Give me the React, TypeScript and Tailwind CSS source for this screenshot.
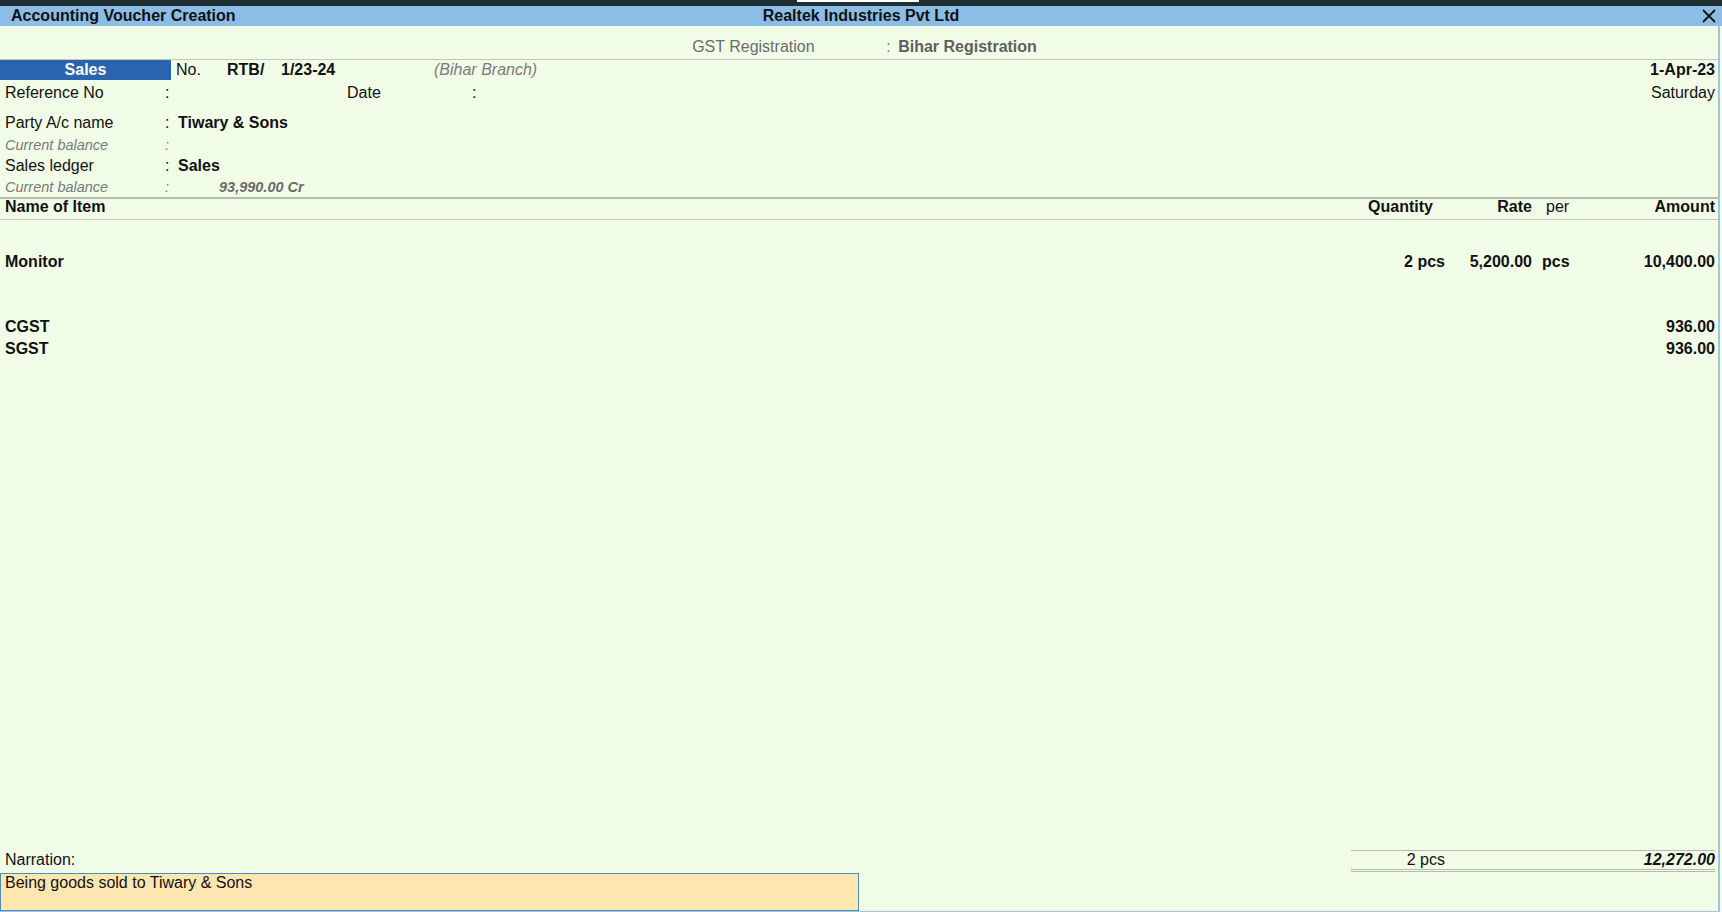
import React from 'react';

type Item = { name: string; qty?: string; rate?: string; per?: string; amount: string; gap: string };

const items: Item[] = [
  { name: 'Monitor', qty: '2 pcs', rate: '5,200.00', per: 'pcs', amount: '10,400.00', gap: 'mt-[32px]' },
  { name: 'CGST', amount: '936.00', gap: 'mt-[45px]' },
  { name: 'SGST', amount: '936.00', gap: 'mt-[2px]' },
];

function CloseIcon() {
  return (
    <svg width="14" height="14" viewBox="0 0 14 14" className="text-[#111]">
      <path d="M1 1 L13 13 M13 1 L1 13" stroke="currentColor" strokeWidth="1.8" fill="none" />
    </svg>
  );
}

export default function App() {
  return (
    <div className="w-[1722px] h-[912px] flex flex-col bg-[#f1fde7] font-['Liberation_Sans',Arial,sans-serif] text-[16px] text-[#111] overflow-hidden">
      {/* window strip */}
      <div className="h-[6px] shrink-0 bg-[#1e2e31] flex">
        <div className="ml-[797px] w-[122px] h-[2px] bg-white" />
      </div>

      {/* title bar */}
      <div className="h-[20px] shrink-0 bg-[#8bbde6] flex items-center px-[11px] font-bold leading-none">
        <div className="flex-1">Accounting Voucher Creation</div>
        <div className="-ml-[5px]">Realtek Industries Pvt Ltd</div>
        <div className="flex-1 flex justify-end -mr-[5px]">
          <CloseIcon />
        </div>
      </div>

      <div className="flex-1 flex flex-col mr-[2px] border-r-2 border-b border-[#9cc6e8]">
        {/* GST registration */}
        <div className="h-[34px] shrink-0 pt-[11px] border-b border-[#c4c7c0]">
          <div className="h-[20px] pl-[11px] flex items-center justify-center">
            <span className="w-[194px] text-[#6b6b6b]">GST Registration</span>
            <span className="w-[12px] text-[#808080]">:</span>
            <span className="font-bold text-[#5f5f5f]">Bihar Registration</span>
          </div>
        </div>

        {/* voucher type row */}
        <div className="h-[20px] shrink-0 flex items-center pr-[3px]">
          <div className="w-[171px] h-full bg-[#2b64ae] text-white font-bold flex items-center justify-center">Sales</div>
          <span className="ml-[5px] w-[51px]">No.</span>
          <span className="w-[54px] font-bold">RTB/</span>
          <span className="w-[153px] font-bold">1/23-24</span>
          <span className="italic text-[#7a7a7a]">(Bihar Branch)</span>
          <span className="flex-1" />
          <span className="font-bold">1-Apr-23</span>
        </div>

        <div className="h-[20px] mt-[3px] shrink-0 flex items-center pl-[5px] pr-[3px]">
          <span className="w-[160px]">Reference No</span>
          <span className="w-[182px]">:</span>
          <span className="w-[125px]">Date</span>
          <span>:</span>
          <span className="flex-1" />
          <span>Saturday</span>
        </div>

        <div className="h-[20px] mt-[10px] shrink-0 flex items-center pl-[5px]">
          <span className="w-[160px]">Party A/c name</span>
          <span className="w-[13px]">:</span>
          <span className="font-bold">Tiwary &amp; Sons</span>
        </div>
        <div className="h-[20px] mt-[3px] shrink-0 flex items-center pl-[5px] text-[14.5px] italic text-[#7a7a7a]">
          <span className="w-[160px]">Current balance</span>
          <span className="w-[13px]">:</span>
        </div>
        <div className="h-[20px] shrink-0 flex items-center pl-[5px]">
          <span className="w-[160px]">Sales ledger</span>
          <span className="w-[13px]">:</span>
          <span className="font-bold">Sales</span>
        </div>
        <div className="h-[20px] mt-[1px] pt-[2px] shrink-0 flex items-center pl-[5px] text-[14.5px] italic text-[#7a7a7a]">
          <span className="w-[160px]">Current balance</span>
          <span className="w-[54px]">:</span>
          <span className="font-bold text-[#6a6a6a]">93,990.00 Cr</span>
        </div>

        {/* column header */}
        <div className="h-[2px] shrink-0 bg-[#b8bbb4]" />
        <div className="h-[21px] shrink-0 flex items-center pb-[4px] pl-[5px] pr-[3px] border-b border-[#c6c9c3] font-bold">
          <span className="flex-1">Name of Item</span>
          <span className="w-[100px] text-right pr-[12px]">Quantity</span>
          <span className="w-[87px] text-right">Rate</span>
          <span className="w-[63px] pl-[14px] font-normal">per</span>
          <span className="w-[120px] text-right">Amount</span>
        </div>

        {items.map((it) => (
          <div key={it.name} className={`${it.gap} h-[20px] shrink-0 flex items-center pl-[5px] pr-[3px] font-bold`}>
            <span className="flex-1">{it.name}</span>
            <span className="w-[100px] text-right">{it.qty}</span>
            <span className="w-[87px] text-right">{it.rate}</span>
            <span className="w-[63px] pl-[10px]">{it.per}</span>
            <span className="w-[120px] text-right">{it.amount}</span>
          </div>
        ))}

        <div className="flex-1" />

        {/* narration + totals */}
        <div className="h-[23px] shrink-0 flex items-start pr-[3px]">
          <span className="pl-[5px] h-[20px] flex items-center">Narration:</span>
          <div className="ml-auto w-[364px] h-[22px] flex items-center border-t border-b-[3px] border-double border-[#b5b9b2]">
            <span className="w-[94px] text-right">2 pcs</span>
            <span className="flex-1 text-right font-bold italic">12,272.00</span>
          </div>
        </div>
        <div className="w-[859px] h-[38px] shrink-0 bg-[#fee6b1] border border-[#4b8fb8] pl-[4px] leading-[18px]">
          Being goods sold to Tiwary &amp; Sons
        </div>
      </div>
    </div>
  );
}
